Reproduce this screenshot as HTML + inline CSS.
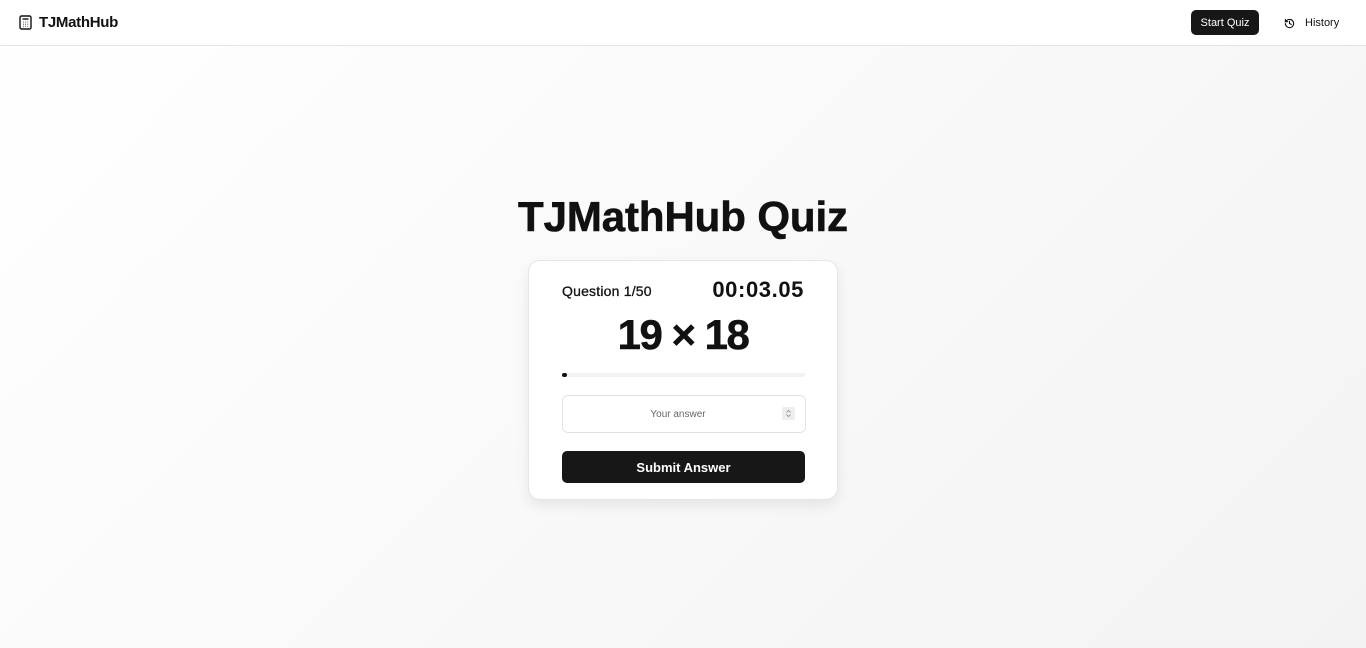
<!DOCTYPE html>
<html><head><meta charset="utf-8"><style>
*{box-sizing:border-box;margin:0;padding:0}
body{width:1366px;height:648px;overflow:hidden;font-family:"Liberation Sans",sans-serif;color:#111;background:linear-gradient(135deg,#ffffff,#f3f3f3);position:relative}
.nav{position:absolute;top:0;left:0;width:1366px;height:46px;background:#fff;border-bottom:1px solid #e4e4e4}
.logo{position:absolute;left:19px;top:14px;font-weight:bold;font-size:15px;display:flex;align-items:center;gap:7px;letter-spacing:-0.3px}
.start{position:absolute;left:1191px;top:10px;width:68px;height:25px;background:#171717;color:#fff;border-radius:5px;font-size:11px;display:flex;align-items:center;justify-content:center}
.hist{position:absolute;left:1284px;top:17px;font-size:11px;display:flex;align-items:center;gap:10px}
h1{position:absolute;left:0;width:1366px;top:193px;text-align:center;font-size:42px;font-weight:bold;letter-spacing:-0.1px;-webkit-text-stroke:0.6px #111}
.card{position:absolute;left:528px;top:260px;width:310px;height:240px;background:#fff;border:1px solid #e6e6e6;border-radius:12px;box-shadow:0 6px 14px rgba(0,0,0,0.08)}
.q{position:absolute;left:33px;top:22px;font-size:14px;letter-spacing:0.2px;-webkit-text-stroke:0.3px #111}
.t{position:absolute;right:33px;top:16px;font-size:22px;font-weight:bold;letter-spacing:0.6px}
.p{position:absolute;left:0;width:308px;top:50px;text-align:center;font-size:42px;font-weight:bold;letter-spacing:-1.5px;-webkit-text-stroke:0.5px #111}
.bar{position:absolute;left:33px;top:112px;width:243px;height:4px;background:#f2f2f2;border-radius:2px}
.bar i{display:block;width:5px;height:4px;background:#111;border-radius:2px}
.inp{position:absolute;left:33px;top:134px;width:244px;height:38px;border:1px solid #e2e2e2;border-radius:6px;font-size:10px;color:#666;display:flex;align-items:center;justify-content:center;padding-right:12px}
.spin{position:absolute;right:10px;top:11px;width:13px;height:13px;background:#eee;border-radius:2px}
.btn{position:absolute;left:33px;top:190px;width:243px;height:32px;background:#171717;color:#fff;border-radius:5px;font-size:13px;font-weight:bold;display:flex;align-items:center;justify-content:center}
</style></head><body>
<div class="nav">
<div class="logo"><svg width="13" height="15" viewBox="0 0 13 15" fill="none" stroke="#111" stroke-width="1.4"><rect x="1" y="1" width="11" height="13" rx="1.5"/><line x1="3.5" y1="4" x2="9.5" y2="4"/><g stroke-width="1.3"><path d="M4 7h.5M6.3 7h.5M8.6 7h.5M4 9.3h.5M6.3 9.3h.5M8.6 9.3h.5M4 11.5h.5M6.3 11.5h.5M8.6 11.5h.5"/></g></svg>TJMathHub</div>
<div class="start">Start Quiz</div>
<div class="hist"><svg width="11" height="11" viewBox="0 0 24 24" fill="none" stroke="#111" stroke-width="2.4" stroke-linecap="round"><path d="M3 12a9 9 0 1 0 3-6.7L3 8"/><path d="M3 3v5h5"/><path d="M12 7v5l4 2"/></svg>History</div>
</div>
<h1>TJMathHub Quiz</h1>
<div class="card">
<div class="q">Question 1/50</div>
<div class="t">00:03.05</div>
<div class="p">19 × 18</div>
<div class="bar"><i></i></div>
<div class="inp">Your answer<div class="spin"><svg width="13" height="13" viewBox="0 0 13 13" fill="none" stroke="#888" stroke-width="0.8"><path d="M4.5 5.5l2-2 2 2M4.5 7.5l2 2 2-2"/></svg></div></div>
<div class="btn">Submit Answer</div>
</div>
</body></html>
